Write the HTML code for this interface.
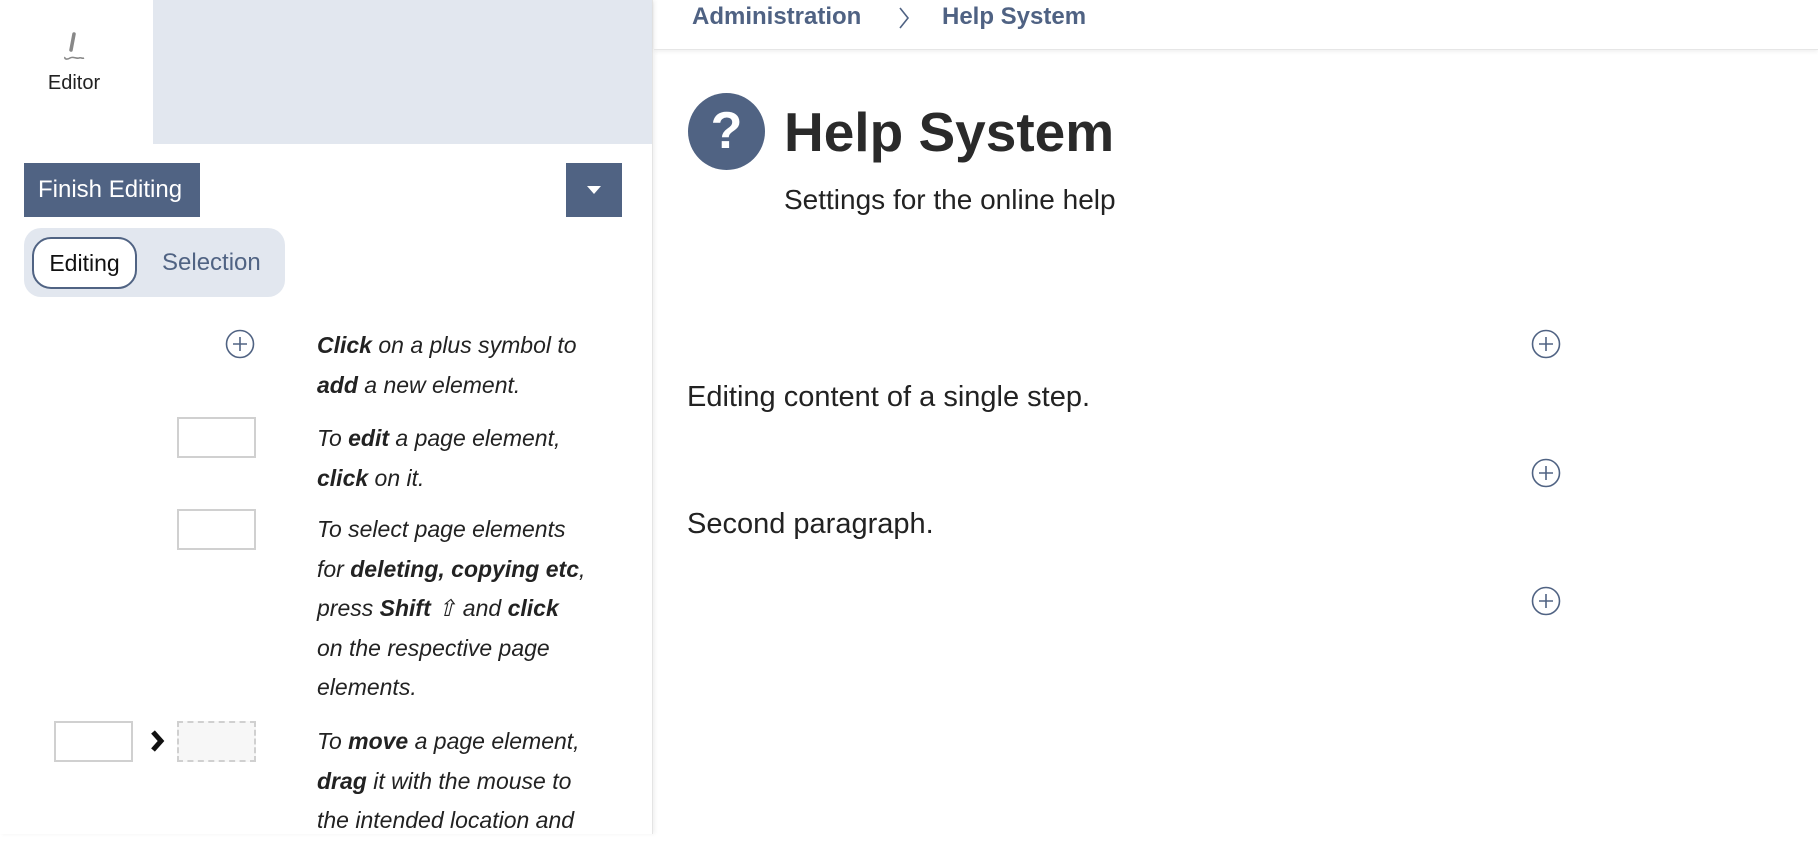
<!DOCTYPE html>
<html><head><meta charset="utf-8"><style>
*{margin:0;padding:0;box-sizing:border-box}
body{width:1818px;height:834px;overflow:hidden;background:#fff;font-family:"Liberation Sans",sans-serif;color:#222;position:relative}
.a{position:absolute;white-space:nowrap}
.side{position:absolute;left:0;top:0;width:653px;height:834px;border-right:1px solid #e4e4e4;box-shadow:2px 0 4px rgba(0,0,0,.06)}
.lt{font-style:italic;font-size:23px;line-height:39.5px;color:#222}
.box{position:absolute;border:2px solid #d0d0d0;background:#fff}
.plus{position:absolute;width:30px;height:30px}
</style></head><body>
<div class="side">
  <div class="a" style="left:153px;top:0;width:499px;height:144px;background:#e2e7ef"></div>
  <svg class="a" style="left:58px;top:32px" width="30" height="32" viewBox="0 0 30 32"><path d="M16 2 L13 18" stroke="#888" stroke-width="3.5" stroke-linecap="round"/><path d="M7 25 C6 27 9 28 12 26 C15 24 18 27 21 26 C23 25 24 27 26 26" stroke="#888" stroke-width="1.6" fill="none"/></svg>
  <div class="a" style="left:0;width:148px;text-align:center;top:72px;font-size:20px;color:#222">Editor</div>
  <div class="a" style="left:24px;top:163px;width:176px;height:54px;background:#506383;color:#fff;font-size:24px;line-height:54px;padding-left:14px">Finish Editing</div>
  <div class="a" style="left:566px;top:163px;width:56px;height:54px;background:#506383"><div style="position:absolute;left:21px;top:23px;border-left:7px solid transparent;border-right:7px solid transparent;border-top:8px solid #fff"></div></div>
  <div class="a" style="left:24px;top:228px;width:261px;height:69px;background:#e2e7ef;border-radius:17px"></div>
  <div class="a" style="left:32px;top:237px;width:105px;height:52px;background:#fff;border:2px solid #506383;border-radius:19px;font-size:23px;line-height:48px;text-align:center;color:#111">Editing</div>
  <div class="a" style="left:162px;top:237px;font-size:24px;line-height:52px;color:#506383">Selection</div>
  <svg class="plus" style="left:225px;top:329px" viewBox="0 0 30 30"><circle cx="15" cy="15" r="13.5" fill="none" stroke="#506383" stroke-width="1.6"/><path d="M15 8v14M8 15h14" stroke="#506383" stroke-width="1.6"/></svg>
  <div class="box" style="left:177px;top:417px;width:79px;height:41px"></div>
  <div class="box" style="left:177px;top:509px;width:79px;height:41px"></div>
  <div class="box" style="left:54px;top:721px;width:79px;height:41px"></div>
  <svg class="a" style="left:148px;top:728px" width="20" height="26" viewBox="0 0 20 26"><path d="M5 4 L13 13 L5 22" stroke="#111" stroke-width="5" fill="none"/></svg>
  <div class="box" style="left:177px;top:721px;width:79px;height:41px;border:2px dashed #d0d0d0;background:#f7f7f7"></div>
  <div class="a lt" style="left:317px;top:326px"><b>Click</b> on a plus symbol to<br><b>add</b> a new element.</div>
  <div class="a lt" style="left:317px;top:419px">To <b>edit</b> a page element,<br><b>click</b> on it.</div>
  <div class="a lt" style="left:317px;top:510px">To select page elements<br>for <b>deleting, copying etc</b>,<br>press <b>Shift</b> ⇧ and <b>click</b><br>on the respective page<br>elements.</div>
  <div class="a lt" style="left:317px;top:722px">To <b>move</b> a page element,<br><b>drag</b> it with the mouse to<br>the intended location and</div>
</div>
<div class="a" style="left:654px;top:0;width:1164px;height:50px;border-bottom:1px solid #e6e6e6;box-shadow:0 2px 4px rgba(0,0,0,.06)"></div>
<div class="a" style="left:692px;top:3px;font-size:24px;font-weight:bold;color:#4f6283">Administration</div>
<svg class="a" style="left:896px;top:5px" width="16" height="26" viewBox="0 0 16 26"><path d="M4 3 L12 13 L4 23" stroke="#4f6283" stroke-width="1.6" fill="none"/></svg>
<div class="a" style="left:942px;top:3px;font-size:24px;font-weight:bold;color:#4f6283">Help System</div>
<div class="a" style="left:688px;top:93px;width:77px;height:77px;border-radius:50%;background:#506383;color:#fff;font-size:52px;font-weight:bold;text-align:center;line-height:77px">?</div>
<div class="a" style="left:784px;top:100px;font-size:55px;font-weight:bold;color:#2a2a2a">Help System</div>
<div class="a" style="left:784px;top:184px;font-size:28px;color:#222">Settings for the online help</div>
<div class="a" style="left:687px;top:381px;font-size:29px;color:#222">Editing content of a single step.</div>
<div class="a" style="left:687px;top:508px;font-size:29px;color:#222">Second paragraph.</div>
<svg class="plus" style="left:1531px;top:329px" viewBox="0 0 30 30"><circle cx="15" cy="15" r="13.5" fill="none" stroke="#506383" stroke-width="1.6"/><path d="M15 8v14M8 15h14" stroke="#506383" stroke-width="1.6"/></svg>
<svg class="plus" style="left:1531px;top:458px" viewBox="0 0 30 30"><circle cx="15" cy="15" r="13.5" fill="none" stroke="#506383" stroke-width="1.6"/><path d="M15 8v14M8 15h14" stroke="#506383" stroke-width="1.6"/></svg>
<svg class="plus" style="left:1531px;top:586px" viewBox="0 0 30 30"><circle cx="15" cy="15" r="13.5" fill="none" stroke="#506383" stroke-width="1.6"/><path d="M15 8v14M8 15h14" stroke="#506383" stroke-width="1.6"/></svg>
</body></html>
